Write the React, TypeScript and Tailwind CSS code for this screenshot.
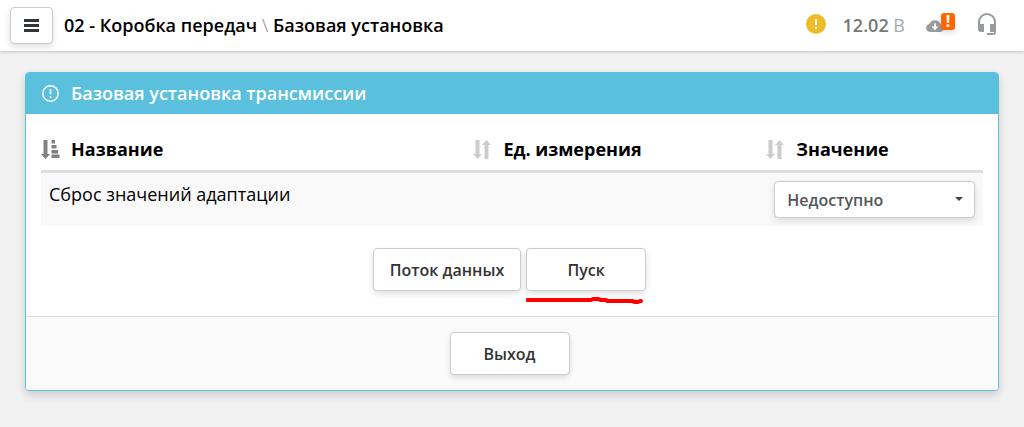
import React, { useState } from 'react';

const BUTTON = 'h-[43px] rounded border border-[#cccccc] bg-white pt-0.5 text-base font-semibold text-[#333333] shadow-[0_3px_6px_rgba(0,0,0,0.12)]';

const MenuIcon: React.FC = () => (
    <svg className="w-[15px] h-[13px]" viewBox="0 0 15 13" fill="#333638" aria-hidden="true">
        <path d="M0 0h15v3H0zM0 5h15v3H0zM0 10h15v3H0z" />
    </svg>
);

const WarningIcon: React.FC = () => (
    <svg className="w-5 h-5" viewBox="0 0 20 20" aria-hidden="true">
        <circle cx="10" cy="10" r="10" fill="#efbb2b" />
        <path d="M9 5h2v6H9zM9 13h2v2H9z" fill="#fff" />
    </svg>
);

const CloudIcon: React.FC = () => (
    <svg className="w-[18px] h-3" viewBox="0 0 18 12" aria-hidden="true">
        <path d="M4 12a4 4 0 0 1-.7-7.9A6 6 0 0 1 14.6 4.300 3.900 3.900 0 0 1 14 12z" fill="#999c9e" />
        <path d="M8 3.500h2v3h2.500L9 10.200 5.500 6.500H8z" fill="#fff" />
    </svg>
);

const HeadsetIcon: React.FC = () => (
    <svg className="w-[18px] h-[22px]" viewBox="0 0 18 22" aria-hidden="true">
        <path
            d="M9 0a9 9 0 0 0-9 9v7a3 3 0 0 0 3 3h3v-8H2V9a7 7 0 0 1 14 0v2h-4v8h4v1H9v2h6a3 3 0 0 0 3-3V9a9 9 0 0 0-9-9z"
            fill="#999c9e"
        />
    </svg>
);

const InfoIcon: React.FC = () => (
    <svg className="w-[17px] h-[17px]" viewBox="0 0 17 17" aria-hidden="true">
        <circle cx="8.5" cy="8.5" r="7.7" fill="none" stroke="#fff" strokeWidth="1.500" />
        <path d="M7.700 4.200h1.600v5H7.700zM7.700 11h1.600v1.700H7.700z" fill="#fff" />
    </svg>
);

const SortIcon: React.FC<{ active?: boolean }> = ({ active }) => (
    <svg className="w-[19px] h-[19px]" viewBox="0 0 19 19" fill={active ? '#808080' : '#cccccc'} aria-hidden="true">
        <path d="M2.500 0h4v14h2.500l-4.500 5L0 14h2.500z" />
        {active ? (
            <path d="M10.500 0h3.500v3.500h-3.500zM10.500 5h5v3.500h-5zM10.500 10h6.500v3.500h-6.500zM10.500 14.500h8v3.500h-8z" />
        ) : (
            <path d="M11.500 19h4V5h2.500l-4.500-5L9 5h2.500z" />
        )}
    </svg>
);

const COLUMNS = [
    { title: 'Название', width: 'w-[45.9%]' },
    { title: 'Ед. измерения', width: 'w-[31.1%]' },
    { title: 'Значение', width: 'w-[23%]' },
];

const Header: React.FC = () => (
    <header className="flex h-[51px] items-center bg-white pl-[10px] pr-7 shadow-[0_1px_3px_rgba(0,0,0,0.2)]">
        <button aria-label="Меню" className="flex h-[37px] w-[43px] items-center justify-center rounded border border-[#cccccc] bg-white shadow-[0_3px_6px_rgba(0,0,0,0.12)]">
            <MenuIcon />
        </button>
        <h1 className="ml-[11px] text-lg leading-[27px] font-semibold text-black">
            02 - Коробка передач <span className="font-normal text-[#aaaaaa]">\</span> Базовая установка
        </h1>
        <div className="ml-auto flex h-full items-center">
            <div className="mb-1">
                <WarningIcon />
            </div>
            <div className="ml-[17px] text-lg leading-[27px] font-semibold text-[#777777]">
                12.02 <span className="font-normal text-[#aaaaaa]">В</span>
            </div>
            <div className="relative ml-[21px] w-[29px]">
                <CloudIcon />
                <span className="absolute -top-[7px] left-[15px] flex h-[17px] w-[14px] items-center justify-center rounded-[3px] bg-[#ff6600] text-base leading-4 font-bold text-white shadow-[0_3px_6px_rgba(0,0,0,0.12)]">
                    !
                </span>
            </div>
            <div className="ml-[23px] mb-1">
                <HeadsetIcon />
            </div>
        </div>
    </header>
);

const App: React.FC = () => {
    const [value, setValue] = useState('Недоступно');

    return (
        <div className="min-h-screen bg-[#f2f2f2] font-['Open_Sans','Noto_Sans',sans-serif]">
            <Header />
            <main className="px-[25px] pt-[21px] pb-9">
                <section className="overflow-hidden rounded border border-[#5bc0de] bg-white shadow-[0_4px_10px_rgba(0,0,0,0.16)]">
                    <div className="flex h-[41px] items-center gap-3 bg-[#5bc0de] px-4 text-white">
                        <InfoIcon />
                        <h2 className="text-lg leading-[27px] font-semibold">Базовая установка трансмиссии</h2>
                    </div>
                    <div className="px-[15px] pt-4 pb-[25px]">
                        <table className="w-full table-fixed">
                            <thead>
                                <tr className="border-b-3 border-[#dddddd]">
                                    {COLUMNS.map((column, index) => (
                                        <th key={column.title} className={`h-[41px] p-0 text-left text-lg leading-[27px] font-bold text-black ${column.width}`}>
                                            <div className="flex items-center gap-[11px]">
                                                <SortIcon active={index === 0} />
                                                {column.title}
                                            </div>
                                        </th>
                                    ))}
                                </tr>
                            </thead>
                            <tbody>
                                <tr className="bg-[#f9f9f9] align-top">
                                    <td className="p-2 text-lg leading-[26px] text-black">
                                        <label htmlFor="adaptation">Сброс значений адаптации</label>
                                    </td>
                                    <td />
                                    <td className="p-2">
                                        <div className="relative">
                                            <select
                                                id="adaptation"
                                                value={value}
                                                onChange={(e) => setValue(e.target.value)}
                                                className="block h-[37px] w-full appearance-none rounded border border-[#cccccc] bg-white px-3 pt-0.5 text-base font-semibold text-[#555555] shadow-[0_3px_6px_rgba(0,0,0,0.12)]"
                                            >
                                                <option>Недоступно</option>
                                            </select>
                                            <svg className="pointer-events-none absolute top-4 right-3 h-1 w-2" viewBox="0 0 8 4" fill="#444444" aria-hidden="true">
                                                <path d="M0 0h8L4 4z" />
                                            </svg>
                                        </div>
                                    </td>
                                </tr>
                            </tbody>
                        </table>
                        <div className="mt-[22px] flex justify-center">
                            <button className={`${BUTTON} mr-[5px] px-4`}>Поток данных</button>
                            <div className="relative mr-[5px]">
                                <button className={`${BUTTON} w-[120px]`}>Пуск</button>
                                <svg className="pointer-events-none absolute top-12 left-0 h-2 w-[118px]" viewBox="0 0 118 8" fill="none" stroke="#ff0000" strokeWidth="4" strokeLinecap="round" strokeLinejoin="round" aria-hidden="true">
                                    <path d="M1.500 4H65l2-1h5l3 1h4l3 1h24l3 1h3l2-1h1" />
                                </svg>
                            </div>
                        </div>
                    </div>
                    <div className="flex justify-center border-t border-[#dddddd] bg-[#fbfbfb] py-[15px]">
                        <button className={`${BUTTON} mr-[5px] w-[120px]`}>Выход</button>
                    </div>
                </section>
            </main>
        </div>
    );
};

export default App;
